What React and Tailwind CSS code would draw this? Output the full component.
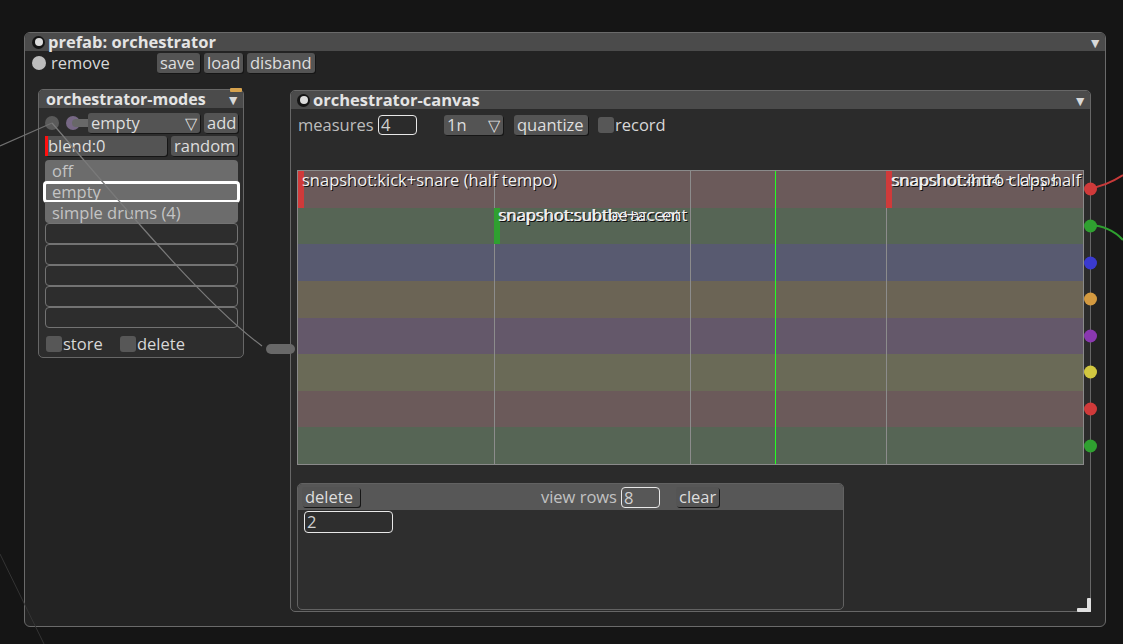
import React from 'react';

// small button used all over the module UI
const Btn = ({ children, className = '' }) => (
  <div className={`h-[20px] px-[3px] rounded-[3px] bg-[#545454] text-[#dedede] text-[16.5px] leading-[20px] shadow-[1px_1px_0_#161616] whitespace-nowrap ${className}`}>
    {children}
  </div>
);

const TitleDot = () => (
  <div className="w-[13px] h-[13px] rounded-full bg-[#151515] flex items-center justify-center shrink-0">
    <div className="w-[8px] h-[8px] rounded-full bg-[#dcdcdc]" />
  </div>
);

const Arrow = () => <span className="text-[14px] leading-none text-[#d8d8d8]">▼</span>;

const Checkbox = () => <div className="w-[16px] h-[16px] rounded-[3px] bg-[#575757] shrink-0" />;

const rows = [
  { bg: 'bg-[#6b5a5a]', dot: 'bg-[#d03a3a]' },
  { bg: 'bg-[#566555]', dot: 'bg-[#2fa030]' },
  { bg: 'bg-[#585a70]', dot: 'bg-[#3a3ad0]' },
  { bg: 'bg-[#6b6455]', dot: 'bg-[#d49a40]' },
  { bg: 'bg-[#64586a]', dot: 'bg-[#8a38b0]' },
  { bg: 'bg-[#6a6a57]', dot: 'bg-[#d2c840]' },
  { bg: 'bg-[#6b5a5a]', dot: 'bg-[#d03a3a]' },
  { bg: 'bg-[#566555]', dot: 'bg-[#2fa030]' },
];

// snapshot labels are drawn on top of each other when they share a spot
const Snap = ({ className, texts }) => (
  <div className={`absolute ${className}`}>
    {texts.map((t, i) => (
      <span
        key={i}
        className="absolute left-0 top-0 whitespace-nowrap text-[16.5px] leading-[20px] text-[#f2f2f2] [text-shadow:1px_1px_0_#111]"
        style={{ left: t.dx || 0 }}
      >
        {t.s}
      </span>
    ))}
  </div>
);

export default function App() {
  return (
    <div className="relative w-[1123px] h-[644px] overflow-hidden bg-[#151515] font-['Open_Sans',sans-serif] text-[16.5px]">
      {/* prefab */}
      <div className="absolute left-[24px] top-[32px] w-[1082px] h-[595px] rounded-[6px] border border-[#6a6a6a] bg-[#232323]">
        <div className="h-[18px] bg-[#4b4b4b] rounded-t-[5px] flex items-center pl-[7px] pr-[3px] gap-[3px]">
          <TitleDot />
          <span className="text-[16.5px] font-bold text-[#e4e4e4] leading-none">prefab: orchestrator</span>
          <div className="ml-auto"><Arrow /></div>
        </div>
        <div className="flex items-center h-[20px] mt-[2px] pl-[7px]">
          <div className="w-[124px] flex items-center">
            <div className="w-[14px] h-[14px] rounded-full bg-[#bdbdbd]" />
            <span className="ml-[5px] text-[#d8d8d8]">remove</span>
          </div>
          <div className="flex gap-[4px] ml-[1px]">
            <Btn className="w-[43px]">save</Btn>
            <Btn className="w-[39px]">load</Btn>
            <Btn className="w-[68px]">disband</Btn>
          </div>
        </div>

        {/* orchestrator-modes */}
        <div className="absolute left-[13px] top-[56px] w-[206px] h-[269px] rounded-[5px] border border-[#676767] bg-[#2d2d2d]">
          <div className="relative h-[18px] bg-[#4b4b4b] rounded-t-[4px] flex items-center pl-[7px] pr-[3px]">
            <span className="text-[16px] font-bold text-[#e4e4e4] leading-none">orchestrator-modes</span>
            <div className="ml-auto"><Arrow /></div>
            <div className="absolute right-[1px] top-[-2px] w-[12px] h-[4px] rounded-[1px] bg-[#d6a24e]" />
          </div>
          <div className="flex items-center h-[20px] mt-[5px] pl-[6px] pr-[5px]">
            <div className="w-[14px] h-[14px] rounded-full bg-[#5a5a5a]" />
            <div className="relative ml-[7px] w-[14px] h-[14px] rounded-full bg-[#776885]">
              <div className="absolute left-[6px] top-[3px] w-[24px] h-[8px] rounded-full bg-[#686868]" />
            </div>
            <div className="relative ml-[8px] w-[112px] h-[20px] rounded-[3px] bg-[#545454] shadow-[1px_1px_0_#161616] flex items-center px-[3px] text-[#dedede]">
              <span>empty</span>
              <span className="ml-auto text-[16px]">▽</span>
            </div>
            <Btn className="ml-[4px] w-[34px]">add</Btn>
          </div>
          <div className="flex items-center h-[20px] mt-[3px] pl-[6px] pr-[5px]">
            <div className="relative w-[122px] h-[20px] rounded-[3px] bg-[#545454] shadow-[1px_1px_0_#161616] text-[#dedede] leading-[20px] pl-[3px]">
              <div className="absolute left-0 top-0 w-[3px] h-[20px] bg-[#ff1010]" />
              blend:0
            </div>
            <Btn className="ml-[4px] w-[67px]">random</Btn>
          </div>
          <div className="mt-[4px] ml-[6px] w-[193px] flex flex-col">
            {['off', 'empty', 'simple drums (4)'].map((t, i) => (
              <div
                key={t}
                className={`relative h-[21px] bg-[#6c6c6c] leading-[21px] text-[#c4c4c4] pl-[7px] ${i === 0 ? 'rounded-t-[4px]' : ''} ${i === 2 ? 'rounded-b-[4px]' : ''}`}
              >
                {t}
                {i === 1 && <div className="absolute left-[-2px] right-[-2px] top-0 bottom-[-1px] rounded-[4px] border-[3px] border-white" />}
              </div>
            ))}
            {[0, 1, 2, 3, 4].map((i) => (
              <div key={i} className="h-[21px] rounded-[4px] border border-[#737373]" />
            ))}
          </div>
          <div className="flex items-center mt-[4px] pl-[7px] text-[#d8d8d8]">
            <Checkbox />
            <span className="ml-[1px] w-[57px]">store</span>
            <Checkbox />
            <span className="ml-[1px]">delete</span>
          </div>
        </div>

        {/* orchestrator-canvas */}
        <div className="absolute left-[265px] top-[57px] w-[801px] h-[522px] rounded-[5px] border border-[#676767] bg-[#2b2b2b] flex flex-col">
          <div className="h-[18px] bg-[#4b4b4b] rounded-t-[4px] flex items-center pl-[6px] pr-[3px] gap-[3px]">
            <TitleDot />
            <span className="text-[16.5px] font-bold text-[#e4e4e4] leading-none">orchestrator-canvas</span>
            <div className="ml-auto"><Arrow /></div>
          </div>
          <div className="flex items-center h-[20px] mt-[6px] pl-[7px]">
            <span className="w-[80px] text-[#bdbdbd]">measures</span>
            <div className="w-[39px] h-[20px] rounded-[4px] border border-[#e8e8e8] text-[#d0d0d0] leading-[18px] pl-[2px]">4</div>
            <div className="ml-[27px] w-[59px] h-[20px] rounded-[3px] bg-[#545454] shadow-[1px_1px_0_#161616] flex items-center px-[3px] text-[#dedede]">
              <span>1n</span>
              <span className="ml-auto text-[16px]">▽</span>
            </div>
            <Btn className="ml-[11px] w-[74px]">quantize</Btn>
            <div className="ml-[10px]"><Checkbox /></div>
            <span className="ml-[1px] text-[#d8d8d8]">record</span>
          </div>

          {/* grid */}
          <div className="relative mt-[35px] ml-[6px] w-[787px] h-[295px] border border-[#8a8a8a] flex flex-col">
            {rows.map((r, i) => (
              <div key={i} className={`relative flex-1 ${r.bg}`}>
                <div className={`absolute right-[-14px] top-1/2 -translate-y-1/2 w-[13px] h-[13px] rounded-full ${r.dot} z-10`} />
              </div>
            ))}
            <div className="absolute top-0 bottom-0 left-[196px] w-px bg-[#8c8c8c]" />
            <div className="absolute top-0 bottom-0 left-[392px] w-px bg-[#8c8c8c]" />
            <div className="absolute top-0 bottom-0 left-[588px] w-px bg-[#8c8c8c]" />
            <div className="absolute top-0 bottom-0 left-[477px] w-px bg-[#22ff22]" />

            <div className="absolute left-0 top-0 w-[6px] h-[37px] bg-[#d03a3a]" />
            <Snap className="left-[4px] top-[-1px]" texts={[{ s: 'snapshot:kick+snare (half tempo)' }]} />

            <div className="absolute left-[196px] top-[37px] w-[6px] h-[36px] bg-[#2fa030]" />
            <Snap
              className="left-[200px] top-[34px]"
              texts={[{ s: 'snapshot:subtle+accent' }, { s: 'snapshot:subtbe+accent', dx: 1 }]}
            />

            <div className="absolute left-[588px] top-0 w-[6px] h-[37px] bg-[#d03a3a]" />
            <Snap
              className="left-[593px] top-[-1px]"
              texts={[{ s: 'snapshot:4nt4 + claps' }, { s: 'snapshot:intro claps half', dx: 1 }]}
            />
          </div>

          {/* lower sub-panel */}
          <div className="mt-[18px] ml-[6px] w-[547px] flex-1 mb-[1px] rounded-[5px] border border-[#626262] bg-[#2e2e2e]">
            <div className="h-[26px] bg-[#575757] rounded-t-[4px] flex items-center pl-[4px]">
              <Btn className="w-[58px]">delete</Btn>
              <span className="w-[259px] text-right pr-[2px] text-[#c2c2c2]">view rows</span>
              <div className="ml-[2px] w-[39px] h-[21px] rounded-[4px] border border-[#e8e8e8] text-[#d0d0d0] leading-[19px] pl-[2px]">8</div>
              <Btn className="ml-[16px] w-[43px]">clear</Btn>
            </div>
            <div className="mt-[1px] ml-[6px] w-[89px] h-[22px] rounded-[4px] border border-[#e8e8e8] text-[#d0d0d0] leading-[20px] pl-[2px]">2</div>
          </div>

          {/* resize handle */}
          <div className="absolute right-[-1px] bottom-[-1px] w-[14px] h-[14px]">
            <div className="absolute right-0 bottom-0 w-[4px] h-[14px] rounded-[1px] bg-[#e0e0e0]" />
            <div className="absolute right-0 bottom-0 w-[14px] h-[4px] rounded-[1px] bg-[#e0e0e0]" />
          </div>
        </div>
      </div>

      {/* patch cables */}
      <svg className="absolute inset-0 pointer-events-none" width="1123" height="644">
        <path d="M0 146 L52 123" stroke="#707070" strokeWidth="1.2" fill="none" />
        <path d="M52 123 C110 190 200 300 262 346" stroke="#7a7a7a" strokeWidth="1.2" fill="none" />
        <rect x="266" y="344" width="29" height="10" rx="5" fill="#686868" />
        <path d="M0 554 L44 644" stroke="#343434" strokeWidth="1" fill="none" />
        <path d="M1090 188 Q1106 186 1123 175" stroke="#c83a3a" strokeWidth="2" fill="none" />
        <path d="M1090 225 Q1110 226 1123 240" stroke="#2fa030" strokeWidth="2" fill="none" />
      </svg>
    </div>
  );
}
